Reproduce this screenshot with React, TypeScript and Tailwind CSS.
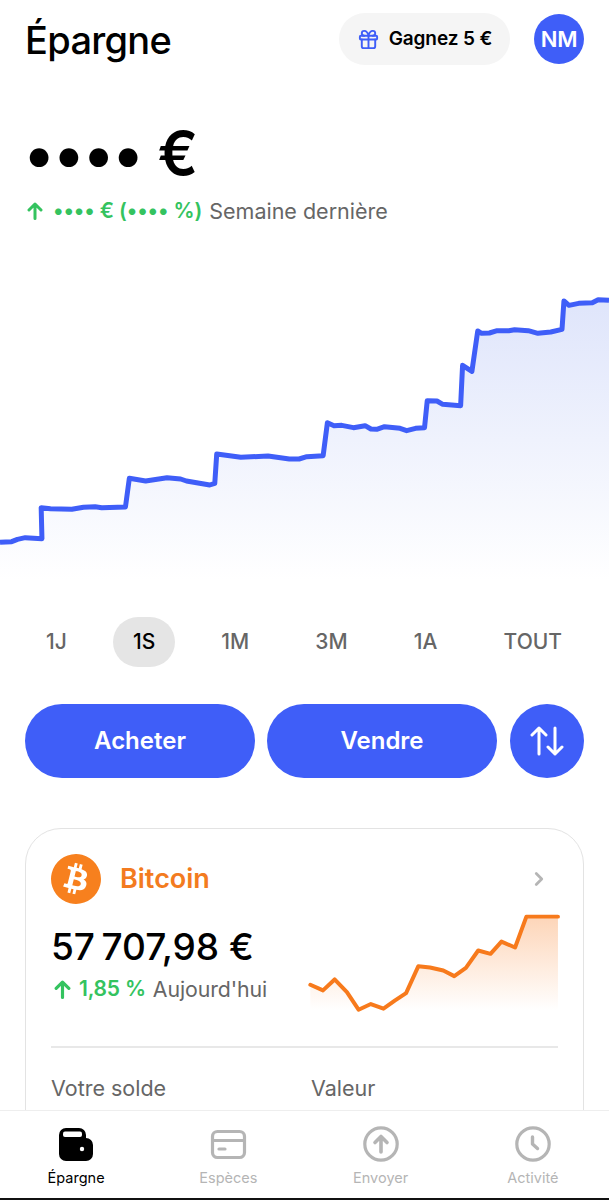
import { Gift, ChevronRight } from "lucide-react";
import { SiBitcoin } from "react-icons/si";

const ranges = ["1J", "1S", "1M", "3M", "1A", "TOUT"];

const mainLine =
  "0,787 30,785 45,778 65,773 108,776 106,683 130,686 185,688 215,682 245,680 262,683 323,681 333,595 375,603 430,593 465,597 480,603 540,615 553,610 558,522 620,532 690,528 745,537 770,537 790,530 832,527 843,428 860,437 880,436 910,443 940,437 955,447 970,448 990,440 1030,445 1047,452 1070,445 1093,443 1100,362 1125,363 1140,373 1186,377 1191,256 1215,274 1230,153 1240,160 1260,159 1280,152 1310,152 1325,149 1360,152 1385,160 1418,156 1447,148 1452,63 1465,76 1490,70 1525,68 1540,59 1568,61";

const sparkLine =
  "60,493 98,510 133,477 170,515 205,568 242,551 280,565 315,540 348,518 385,437 420,441 460,450 493,467 528,442 565,390 602,400 635,363 676,381 710,288 805,288";

function UpArrow({ className }: { className: string }) {
  return (
    <svg viewBox="0 0 16 18" fill="none" stroke="currentColor" strokeWidth="3" strokeLinecap="round" strokeLinejoin="round" className={className}>
      <path d="M8 16.5V2M2 8l6-6 6 6" />
    </svg>
  );
}

function WalletIcon() {
  return (
    <svg viewBox="0 0 34 33" className="h-[33px] w-[34px]">
      <path
        d="M7 0h13a7 7 0 0 1 7 7v3a7 7 0 0 1 7 7v9a7 7 0 0 1-7 7H7a7 7 0 0 1-7-7V7a7 7 0 0 1 7-7z"
        fill="#000"
      />
      <rect x="4" y="3.500" width="19" height="5.500" rx="2" fill="#fff" />
      <circle cx="23" cy="21" r="2.200" fill="#fff" />
    </svg>
  );
}

function CardIcon() {
  return (
    <svg viewBox="0 0 37 31" fill="none" className="h-[31px] w-[37px]">
      <rect x="2.500" y="2.500" width="32" height="26" rx="5" stroke="#b5b5b5" strokeWidth="3.200" />
      <path d="M2 11.500h33" stroke="#b5b5b5" strokeWidth="3.200" />
      <path d="M9 20h6" stroke="#b5b5b5" strokeWidth="3.200" strokeLinecap="round" />
    </svg>
  );
}

function SendIcon() {
  return (
    <svg viewBox="0 0 36 36" fill="none" stroke="#b5b5b5" strokeLinecap="round" strokeLinejoin="round" className="h-9 w-9">
      <circle cx="18" cy="18" r="16.200" strokeWidth="3.200" />
      <path d="M18 26V11M12 16.500 18 10.500l6 6" strokeWidth="3.600" />
    </svg>
  );
}

function ClockIcon() {
  return (
    <svg viewBox="0 0 36 36" fill="none" stroke="#b5b5b5" strokeLinecap="round" strokeLinejoin="round" className="h-9 w-9">
      <circle cx="18" cy="18" r="16.200" strokeWidth="3.200" />
      <path d="M17.500 11v7l5 4.500" strokeWidth="3.400" />
    </svg>
  );
}

function NavItem({ icon, label, active }: { icon: React.ReactNode; label: string; active?: boolean }) {
  return (
    <div className="flex flex-col items-center">
      <div className="flex h-[36px] items-center">{icon}</div>
      <span className={`mt-[7px] text-[14.5px] leading-[18px] ${active ? "text-black" : "text-[#b5b5b5]"}`}>{label}</span>
    </div>
  );
}

export default function App() {
  return (
    <div className="relative h-[1200px] w-[609px] overflow-hidden bg-white font-['Inter',sans-serif]">
      <header className="flex items-center px-[25px] pt-[13px]">
        <h1 className="pt-[3px] text-[38px] leading-[49px] font-medium tracking-[-0.7px] text-black">Épargne</h1>
        <div className="ml-auto flex h-[52px] w-[171px] items-center justify-center gap-[9px] rounded-full bg-[#f5f5f5]">
          <Gift size={23} className="text-[#3f5ef8]" strokeWidth={2} />
          <span className="text-[19px] font-semibold tracking-[-0.1px] text-black">Gagnez 5 €</span>
        </div>
        <div className="ml-6 flex h-[50px] w-[50px] items-center justify-center rounded-full bg-[#3f5ef8] text-[22px] font-semibold tracking-[-0.3px] text-white">
          NM
        </div>
      </header>

      <div className="mt-[52px] px-[24px] text-[60px] leading-[72px] font-semibold tracking-[-0.5px] text-black">•••• €</div>
      <div className="mt-[7px] flex items-center px-[27px] text-[21px] leading-[30px]">
        <UpArrow className="h-[18px] w-4 text-[#34c35f]" />
        <span className="ml-[10px] font-semibold tracking-[-0.15px] text-[#34c35f]">•••• € (•••• %)</span>
        <span className="ml-[7px] text-[21.5px] text-[#666]">Semaine dernière</span>
      </div>

      {/* chart, y scale of the points is 3x, x scale 2.575x */}
      <svg viewBox="0 0 1568 900" preserveAspectRatio="none" className="mt-[54px] block h-[300px] w-[609px]">
        <defs>
          <linearGradient id="mainFill" x1="0" y1="0" x2="0" y2="1">
            <stop offset="0%" stopColor="#dfe5fb" />
            <stop offset="100%" stopColor="#ffffff" />
          </linearGradient>
        </defs>
        <polygon points={`${mainLine} 1568,900 0,900`} fill="url(#mainFill)" />
        <polyline
          points={mainLine}
          fill="none"
          stroke="#3f5ef8"
          strokeWidth="5"
          strokeLinejoin="round"
          vectorEffect="non-scaling-stroke"
        />
      </svg>

      <div className="mt-[37px] flex justify-between pr-[29px] pl-[28px]">
        {ranges.map((r) => (
          <div
            key={r}
            className={`flex h-[50px] items-center rounded-full text-[21px] font-medium ${
              r === "1S" ? "-mx-[1.5px] bg-[#e5e5e5] px-[19.5px] text-black" : "px-[18px] text-[#666]"
            }`}
          >
            {r}
          </div>
        ))}
      </div>

      <div className="mt-[37px] flex gap-3 px-[25px]">
        <button className="h-[74px] flex-1 rounded-full bg-[#3f5ef8] text-[24px] font-semibold text-white">Acheter</button>
        <button className="h-[74px] flex-1 rounded-full bg-[#3f5ef8] text-[24px] font-semibold text-white">Vendre</button>
        <button className="ml-px flex h-[74px] w-[74px] items-center justify-center rounded-full bg-[#3f5ef8] text-white">
          <svg viewBox="0 0 34 30" fill="none" stroke="currentColor" strokeWidth="3" strokeLinecap="round" strokeLinejoin="round" className="h-[30px] w-[34px]">
            <path d="M9 28V2M2 9l7-7 7 7" />
            <path d="M25 2v26M18 21l7 7 7-7" />
          </svg>
        </button>
      </div>

      <section className="mx-[25px] mt-[50px] h-[400px] rounded-[36px] border border-[#e3e3e3] px-[25px] pt-[25px]">
        <div className="flex items-center">
          <SiBitcoin size={50} className="text-[#f7801e]" />
          <span className="ml-[19px] text-[27px] font-semibold text-[#f37b20]">Bitcoin</span>
          <ChevronRight size={22} strokeWidth={3} className="mr-[8px] ml-auto text-[#b5b5b5]" />
        </div>
        <div className="-mr-[7px] flex items-start justify-between">
          <div className="pt-[17px]">
            <div className="text-[37px] leading-[52px] font-medium tracking-[-0.6px] text-black">57{"\u202f"}707,98 €</div>
            <div className="mt-[1px] flex items-center pl-[3px] text-[21px] leading-[30px]">
              <UpArrow className="h-[19px] w-[17px] text-[#34c35f]" />
              <span className="ml-[8px] font-semibold tracking-[-0.2px] text-[#34c35f]">1,85 %</span>
              <span className="ml-[7px] text-[21.3px] tracking-[-0.1px] text-[#666]">Aujourd'hui</span>
            </div>
          </div>
          <svg viewBox="30 250 795 340" className="h-[113px] w-[265px]">
            <defs>
              <linearGradient id="sparkFill" x1="0" y1="0" x2="0" y2="1">
                <stop offset="0%" stopColor="#fdd5b8" />
                <stop offset="100%" stopColor="#ffffff" />
              </linearGradient>
            </defs>
            <polygon points={`${sparkLine} 805,570 60,570`} fill="url(#sparkFill)" />
            <polyline points={sparkLine} fill="none" stroke="#f77a1c" strokeWidth="12" strokeLinecap="round" strokeLinejoin="round" />
          </svg>
        </div>
        <div className="mt-[29px] h-[2px] bg-[#e8e8e8]" />
        <div className="mt-[26px] grid grid-cols-[260px_1fr] text-[21.5px] leading-[28px] text-[#666]">
          <span>Votre solde</span>
          <span>Valeur</span>
        </div>
      </section>

      <nav className="absolute inset-x-0 bottom-0 grid h-[90px] grid-cols-4 border-t border-b-2 border-t-[#eeeeee] border-b-[#111] bg-white pt-[15px]">
        <NavItem icon={<WalletIcon />} label="Épargne" active />
        <NavItem icon={<CardIcon />} label="Espèces" />
        <NavItem icon={<SendIcon />} label="Envoyer" />
        <NavItem icon={<ClockIcon />} label="Activité" />
      </nav>
    </div>
  );
}
